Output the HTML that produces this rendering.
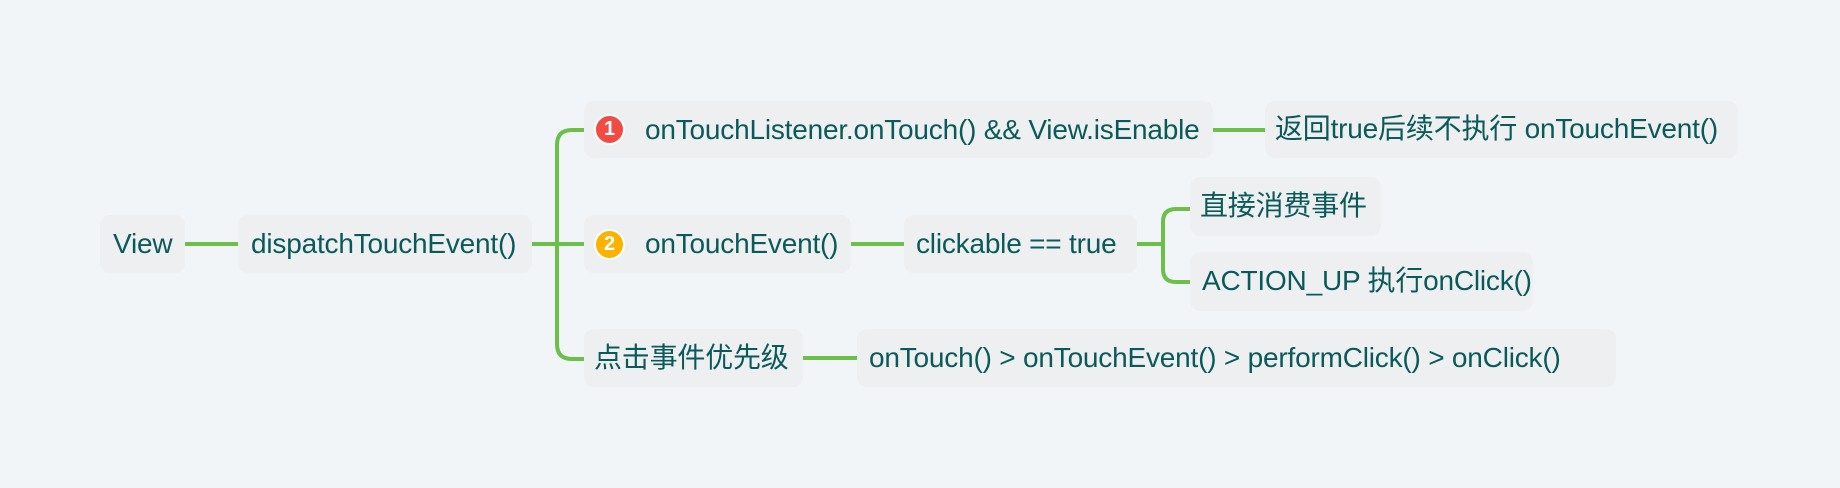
<!DOCTYPE html>
<html><head><meta charset="utf-8"><style>
body{margin:0;width:1840px;height:488px;background:#f2f5f8;position:relative;overflow:hidden;font-family:"Liberation Sans","Noto Sans CJK SC",sans-serif;}
.n{position:absolute;background:#edeff1;border-radius:10px;color:#0b5a5a;font-size:28px;display:flex;align-items:center;padding-left:13px;box-sizing:border-box;white-space:nowrap;letter-spacing:-0.2px}
.c{padding-bottom:5px}
.ic{display:inline-block;width:31px;height:31px;border-radius:50%;color:#fff;font-weight:bold;font-size:20px;text-align:center;line-height:27px;margin-right:20px;border:2px solid #fff;box-sizing:border-box;letter-spacing:0}
svg{position:absolute;left:0;top:0}
</style></head><body>
<svg width="1840" height="488" fill="none" stroke="#6cc04a" stroke-width="4">
<path d="M185 244H238"/>
<path d="M532 244H584"/>
<path d="M584 130H572Q557 130 557 145V344Q557 359 572 359H584"/>
<path d="M1213 130H1265"/>
<path d="M851 244H904"/>
<path d="M1137 244H1163"/>
<path d="M1190 209H1176Q1163 209 1163 222V269Q1163 282 1176 282H1190"/>
<path d="M803 358H857"/>
</svg>
<div class="n" style="left:100px;top:215px;width:85px;height:58px">View</div>
<div class="n" style="left:238px;top:215px;width:294px;height:58px">dispatchTouchEvent()</div>
<div class="n" style="left:584px;top:101px;width:629px;height:57px;padding-left:10px"><span class="ic" style="background:#f24b44">1</span>onTouchListener.onTouch() &amp;&amp; View.isEnable</div>
<div class="n c" style="left:1265px;top:101px;width:473px;height:57px;padding-left:10px">返回true后续不执行 onTouchEvent()</div>
<div class="n" style="left:584px;top:215px;width:267px;height:58px;padding-left:10px"><span class="ic" style="background:#fbb300">2</span>onTouchEvent()</div>
<div class="n" style="left:904px;top:215px;width:233px;height:58px;padding-left:12px">clickable == true</div>
<div class="n c" style="left:1190px;top:177px;width:191px;height:59px;padding-left:10px">直接消费事件</div>
<div class="n c" style="left:1190px;top:252px;width:343px;height:59px;padding-left:12px">ACTION_UP 执行onClick()</div>
<div class="n c" style="left:584px;top:329px;width:219px;height:58px;padding-left:10px">点击事件优先级</div>
<div class="n" style="left:857px;top:329px;width:759px;height:58px;padding-left:12px">onTouch() &gt; onTouchEvent() &gt; performClick() &gt; onClick()</div>
</body></html>
